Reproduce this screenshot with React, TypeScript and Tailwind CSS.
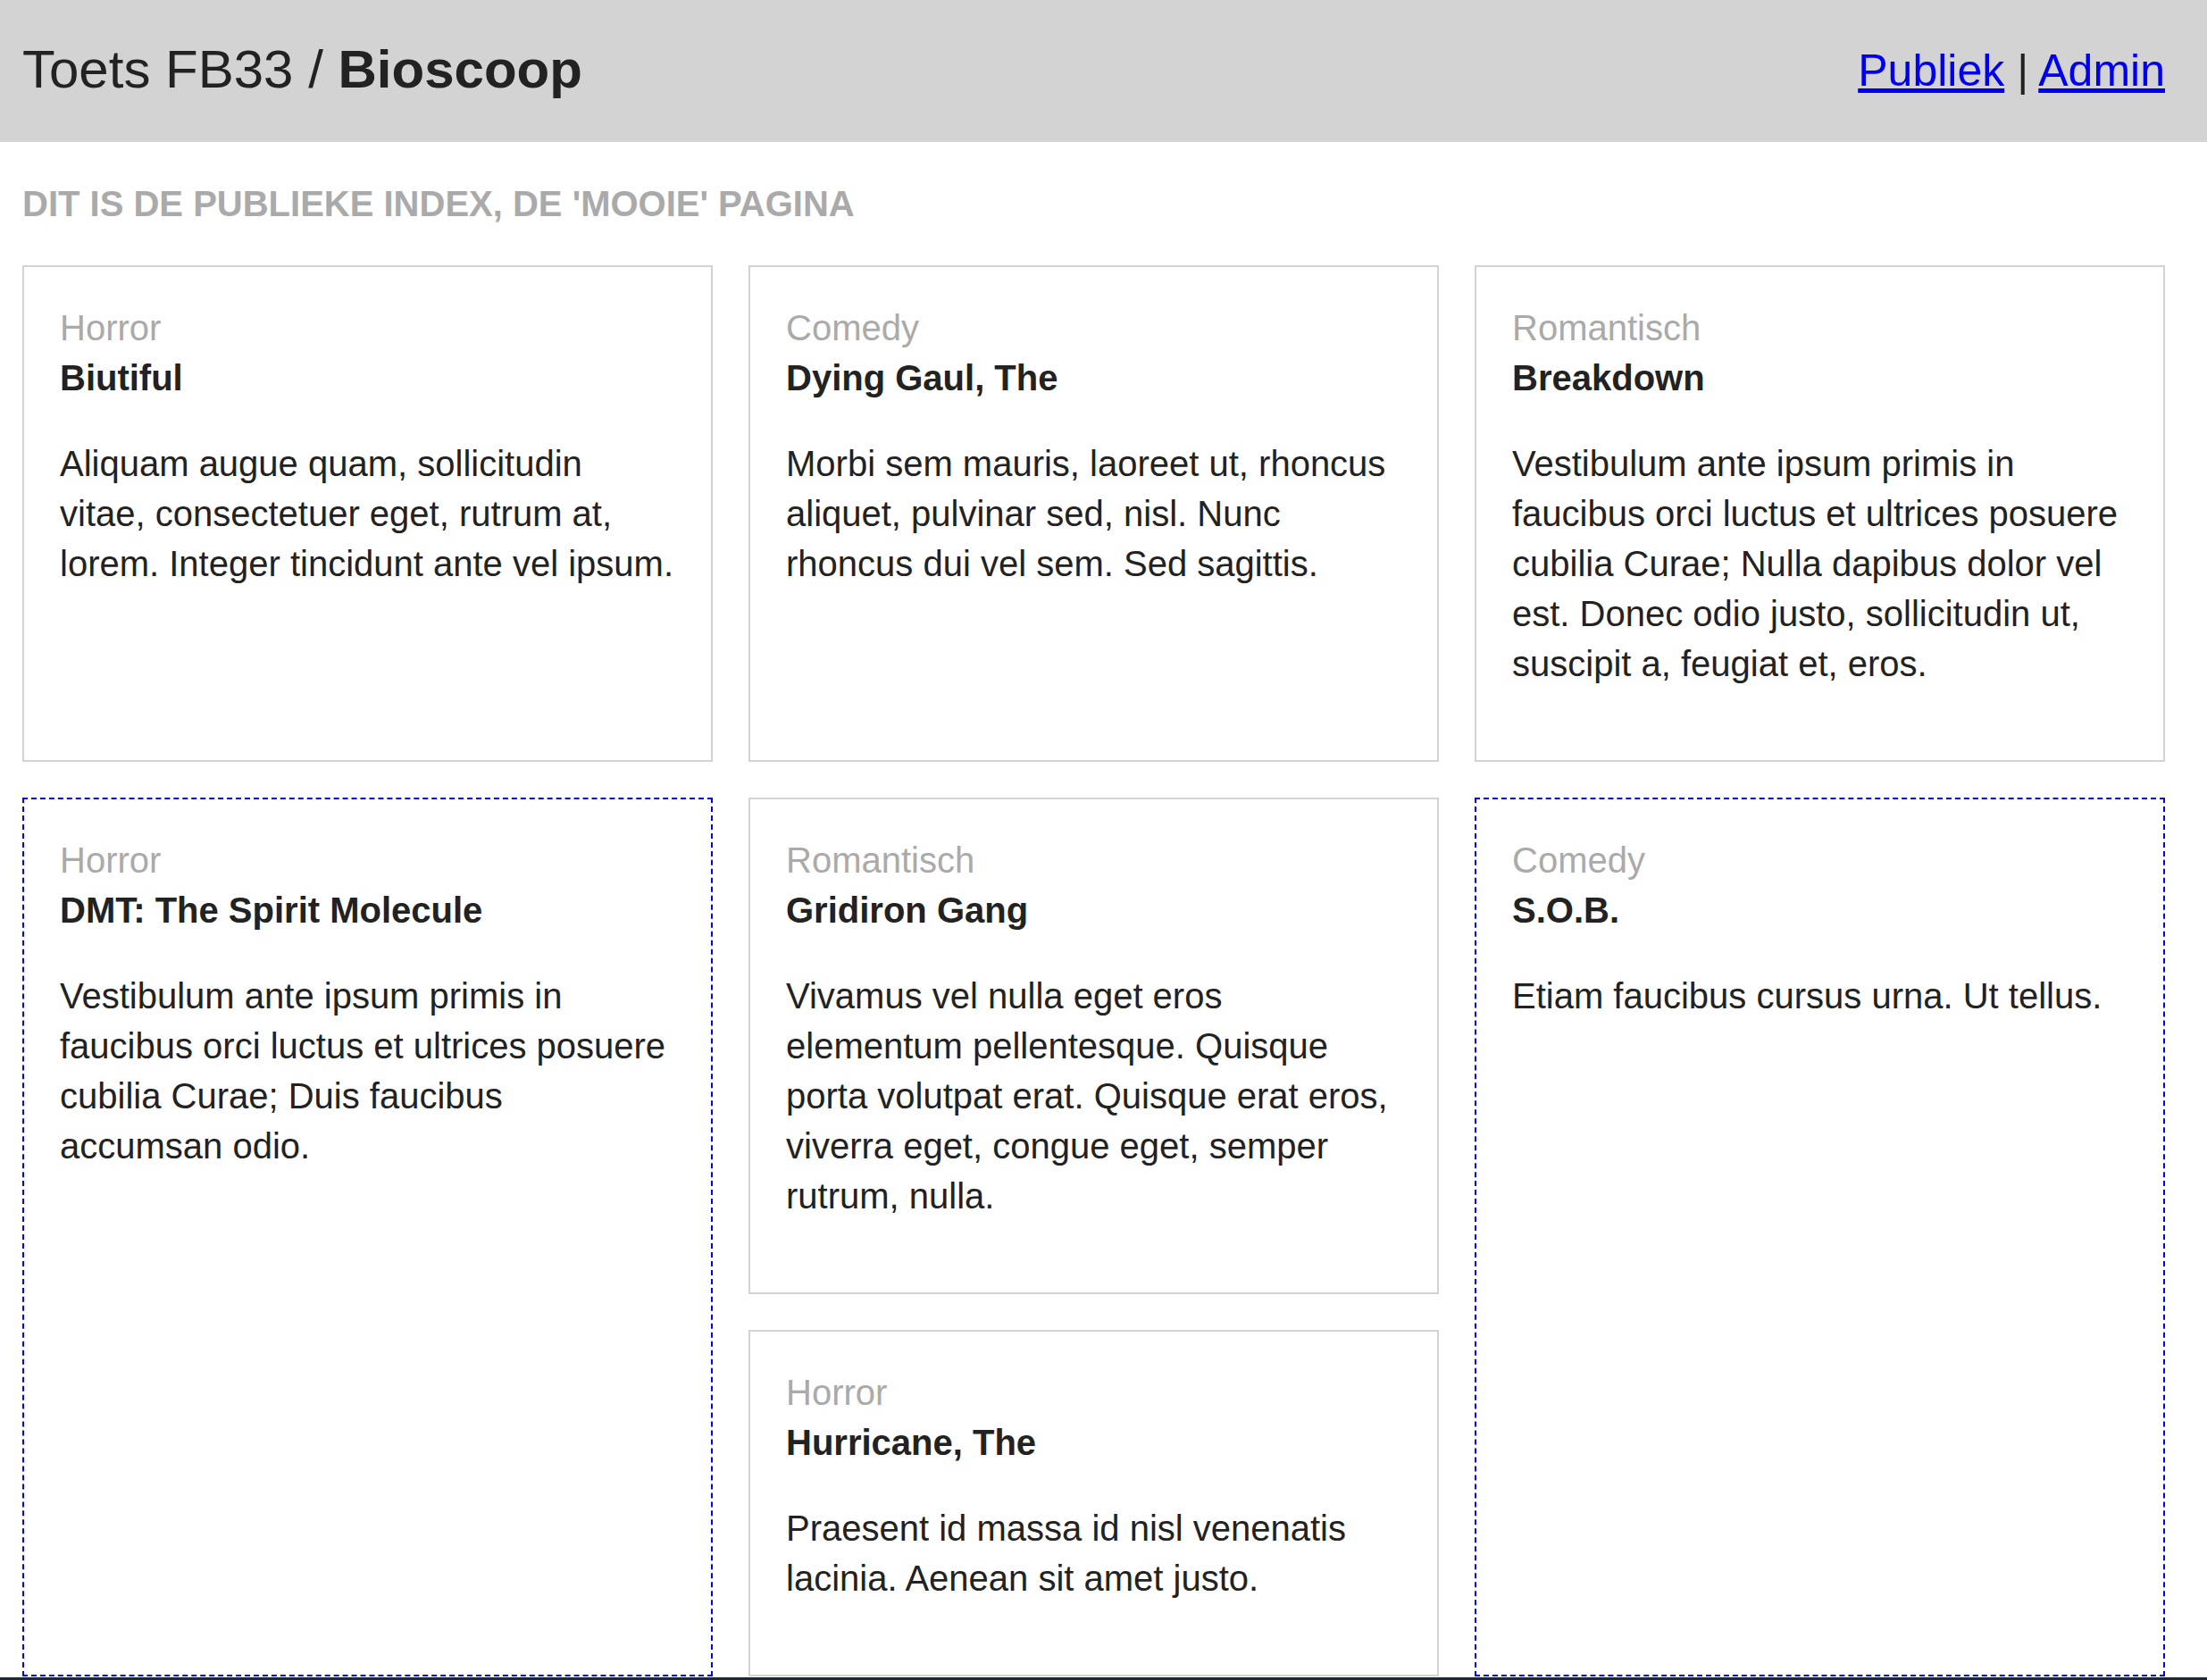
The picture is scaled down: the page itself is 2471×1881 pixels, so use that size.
import React from 'react';

interface Film {
  genre: string;
  title: string;
  text: string;
  featured?: boolean;
}

const films: Film[] = [
  {
    genre: 'Horror',
    title: 'Biutiful',
    text: 'Aliquam augue quam, sollicitudin vitae, consectetuer eget, rutrum at, lorem. Integer tincidunt ante vel ipsum.',
  },
  {
    genre: 'Comedy',
    title: 'Dying Gaul, The',
    text: 'Morbi sem mauris, laoreet ut, rhoncus aliquet, pulvinar sed, nisl. Nunc rhoncus dui vel sem. Sed sagittis.',
  },
  {
    genre: 'Romantisch',
    title: 'Breakdown',
    text: 'Vestibulum ante ipsum primis in faucibus orci luctus et ultrices posuere cubilia Curae; Nulla dapibus dolor vel est. Donec odio justo, sollicitudin ut, suscipit a, feugiat et, eros.',
  },
  {
    genre: 'Horror',
    title: 'DMT: The Spirit Molecule',
    text: 'Vestibulum ante ipsum primis in faucibus orci luctus et ultrices posuere cubilia Curae; Duis faucibus accumsan odio.',
    featured: true,
  },
  {
    genre: 'Romantisch',
    title: 'Gridiron Gang',
    text: 'Vivamus vel nulla eget eros elementum pellentesque. Quisque porta volutpat erat. Quisque erat eros, viverra eget, congue eget, semper rutrum, nulla.',
  },
  {
    genre: 'Comedy',
    title: 'S.O.B.',
    text: 'Etiam faucibus cursus urna. Ut tellus.',
    featured: true,
  },
  {
    genre: 'Horror',
    title: 'Hurricane, The',
    text: 'Praesent id massa id nisl venenatis lacinia. Aenean sit amet justo.',
  },
];

function FilmCard({ film }: { film: Film }) {
  return (
    <div
      className={
        film.featured
          ? 'row-span-2 border-2 border-dashed border-[#0000ff] p-10'
          : 'border-2 border-solid border-[#d3d3d3] p-10'
      }
    >
      <div className="text-[#aaaaaa]">{film.genre}</div>
      <div className="font-bold">{film.title}</div>
      <p className="my-10">{film.text}</p>
    </div>
  );
}

export default function App() {
  return (
    <div className="min-h-screen bg-white text-[#222222] text-[40px] leading-[1.4] font-['Liberation_Sans',Arial,sans-serif]">
      <header className="flex h-[159px] items-center justify-between bg-[#d3d3d3] pl-[25px] pr-[47px]">
        <h1 className="mb-[4px] text-[60px] leading-normal font-normal">
          Toets FB33 / <span className="font-bold">Bioscoop</span>
        </h1>
        <nav className="text-[50px] leading-normal">
          <a href="#" className="text-[#0000ee] underline">
            Publiek
          </a>{' '}
          |{' '}
          <a href="#" className="text-[#0000ee] underline">
            Admin
          </a>
        </nav>
      </header>

      <main className="pl-[25px] pr-[47px] pt-[41px]">
        <h2 className="font-bold uppercase text-[#aaaaaa]">Dit is de publieke index, de 'mooie' pagina</h2>
        <div className="mt-[41px] grid grid-cols-3 gap-10">
          {films.map((film) => (
            <FilmCard key={film.title} film={film} />
          ))}
        </div>
      </main>

      <footer className="mt-[1px] h-[120px] bg-[#1d2930]" />
    </div>
  );
}
